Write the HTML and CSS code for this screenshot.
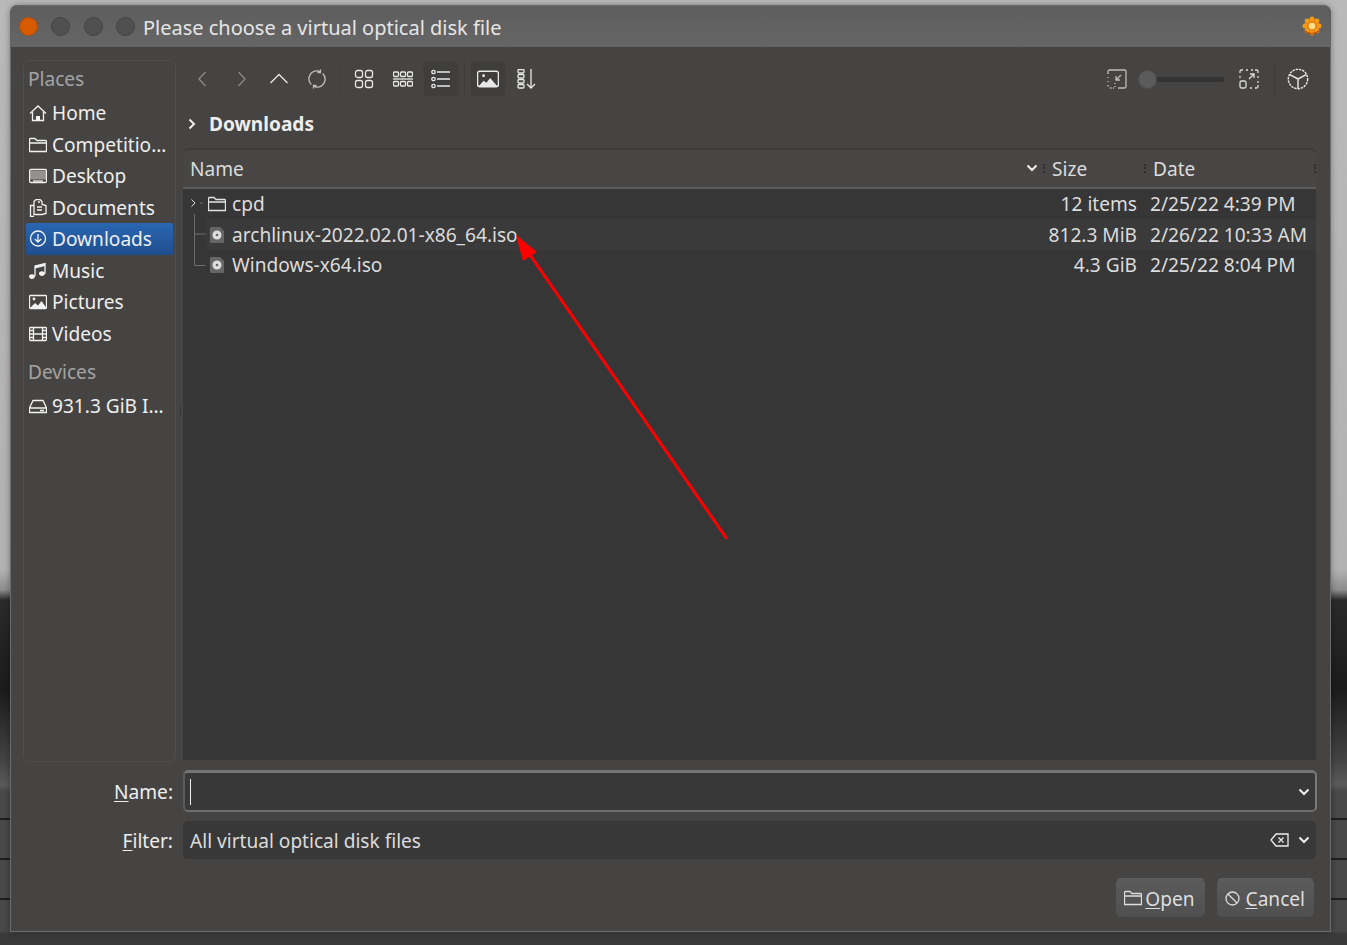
FILE: index.html
```html
<!DOCTYPE html>
<html lang="en">
<head>
<meta charset="utf-8">
<title>Please choose a virtual optical disk file</title>
<link rel="stylesheet" href="styles.css">
</head>
<body>
<div class="window">
	<header class="titlebar">
		<span class="dot dot-close"></span>
		<span class="dot"></span>
		<span class="dot"></span>
		<span class="dot"></span>
		<span class="title">Please choose a virtual optical disk file</span>
		<svg class="app-icon" width="20" height="20" viewBox="0 0 20 20"><circle cx="10" cy="10" r="7.500" fill="#ee8410"/><g fill="#f39a18"><circle cx="10" cy="2.900" r="2.400"/><circle cx="10" cy="17.100" r="2.400"/><circle cx="2.900" cy="10" r="2.400"/><circle cx="17.100" cy="10" r="2.400"/><circle cx="5" cy="5" r="2.400"/><circle cx="15" cy="5" r="2.400"/><circle cx="5" cy="15" r="2.400"/><circle cx="15" cy="15" r="2.400"/></g><circle cx="10" cy="10" r="3.200" fill="#ffe08a"/><path d="M3 15c3 3.500 10 3.500 14 0" fill="none" stroke="#b9500c" stroke-width="1.500"/></svg>
	</header>

	<div class="content">
		<div class="main">
			<aside class="places">
				<h4>Places</h4>
				<a class="place"><svg viewBox="0 0 18 18"><path d="M1 9.500 9 2l8 7.500M3.500 8v8.500h11V8"/><path class="solid" d="M7 12h4v4.500H7z"/></svg>Home</a>
				<a class="place"><svg viewBox="0 0 18 18"><path d="M.5 15.500v-12a1 1 0 0 1 1-1h4.500l2 2h8.500a1 1 0 0 1 1 1v10zM.5 7h17"/></svg>Competitio…</a>
				<a class="place"><svg viewBox="0 0 18 18"><rect x=".5" y="2.500" width="17" height="13" rx="1.500"/><path class="solid" d="M1 4h16v8.500H1z" opacity=".45"/><path d="M4 14h10"/></svg>Desktop</a>
				<a class="place"><svg viewBox="0 0 18 18"><path d="M5 17.500H1.500v-11H5M5 5.500V2.500l2-2h4l2 2v3l4 1v8l-4 1H5zM9 3h2M8 8h5M8 11h5"/></svg>Documents</a>
				<a class="place place-on"><svg viewBox="0 0 18 18"><circle cx="9" cy="8.500" r="7.500"/><path d="M9 4v8M5.800 9 9 12l3.200-3"/></svg>Downloads</a>
				<a class="place"><svg viewBox="0 0 18 18"><path d="M6 14V4l10-2.500v10"/><path class="solid" d="M6 14.500a3 2.400 0 1 1-5 -1.700 3 2.400 0 0 1 5 1.700zM16 11.500a3 2.400 0 1 1-5-1.700 3 2.400 0 0 1 5 1.700zM6 4l10-2.500v2.500L6 6.500z"/></svg>Music</a>
				<a class="place"><svg viewBox="0 0 18 18"><rect x=".5" y="2.500" width="17" height="13" rx="1"/><circle class="solid" cx="5" cy="6" r="1.400"/><path class="solid" d="M1 15l5-5 3 2.500 3.500-4.500 5 7z"/></svg>Pictures</a>
				<a class="place"><svg viewBox="0 0 18 18"><rect x=".5" y="2.500" width="17" height="13" rx="1"/><path d="M4.500 2.500v13M13.500 2.500v13M4.500 9h9M.5 5.500h4M.5 9h4M.5 12.500h4M13.500 5.500h4M13.500 9h4M13.500 12.500h4"/></svg>Videos</a>
				<h4 class="devices">Devices</h4>
				<a class="place"><svg viewBox="0 0 18 18"><path d="M.5 11 4 3.500h10l3.500 7.500v4.500H.5zM.5 11h17M11 13.500h4"/></svg>931.3 GiB I…</a>
			</aside>

			<div class="splitter"><i></i><i></i><i></i></div>

			<div class="browser">
				<div class="toolbar">
					<button class="tool dim"><svg viewBox="0 0 20 20"><path d="M12.500 3 6 10l6.500 7"/></svg></button>
					<button class="tool dim"><svg viewBox="0 0 20 20"><path d="M7.500 3 14 10l-6.500 7"/></svg></button>
					<button class="tool"><svg viewBox="0 0 20 20"><path d="M1.500 14 10 5.500l8.500 8.500"/></svg></button>
					<button class="tool dimmer"><svg viewBox="0 0 20 20"><path d="M4.300 15.500A8 8 0 0 1 11.500 2l1.800 1M15.700 4.500A8 8 0 0 1 8.500 18l-1.800-1M13.500 .5v3h-3M6.500 19.500v-3h3"/></svg></button>
					<span class="sep"></span>
					<button class="tool"><svg viewBox="0 0 20 20"><rect x="1.500" y="1.500" width="7" height="7" rx="2"/><rect x="11.500" y="1.500" width="7" height="7" rx="2"/><rect x="1.500" y="11.500" width="7" height="7" rx="2"/><rect x="11.500" y="11.500" width="7" height="7" rx="2"/></svg></button>
					<button class="tool tool-gap"><svg viewBox="0 0 20 20"><rect x=".5" y="3" width="5" height="4.500" rx="1"/><rect x="7.500" y="3" width="5" height="4.500" rx="1"/><rect x="14.500" y="3" width="5" height="4.500" rx="1"/><path d="M0 10h20"/><rect x=".5" y="12.500" width="5" height="4.500" rx="1"/><rect x="7.500" y="12.500" width="5" height="4.500" rx="1"/><rect x="14.500" y="12.500" width="5" height="4.500" rx="1"/></svg></button>
					<button class="tool tool-on"><svg viewBox="0 0 20 20"><circle cx="2.500" cy="3" r="1.700"/><circle cx="2.500" cy="10" r="1.700"/><circle cx="2.500" cy="17" r="1.700"/><path d="M6 3h13M6 10h13M6 17h13"/></svg></button>
					<span class="sep sep-tight"></span>
					<button class="tool tool-on"><svg viewBox="0 0 20 20" class="big"><rect x=".5" y="3" width="19" height="14" rx="2"/><circle class="solid" cx="6" cy="7" r="1.300"/><path class="solid" d="M1.500 16.500 6 11.500l2.500 2 3.500-4.500 6.500 7.500z"/></svg></button>
					<button class="tool tool-gap"><svg viewBox="0 0 20 20"><rect x="1" y=".5" width="6" height="3.500" rx="1"/><rect x="1" y="5.500" width="6" height="3.500" rx="1"/><rect x="1" y="10.500" width="6" height="3.500" rx="1"/><rect x="1" y="15.500" width="6" height="3.500" rx="1"/><path d="M14 0v19M10 15l4 4 4-4"/></svg></button>
					<span class="spacer"></span>
					<button class="tool dimmer"><svg viewBox="0 0 20 20"><path d="M1 5V2.500a1.500 1.500 0 0 1 1.500-1.500h15a1.500 1.500 0 0 1 1.500 1.500v15a1.500 1.500 0 0 1-1.500 1.500H11M14 6l-5 5M9 7v4h4"/><path d="M1 8v1M1 12v1M1 16v1.500M3 19h1.500M6 19h1M8 14v1M8 17v1"/></svg></button>
					<div class="zoom-slider"><span class="knob"></span><span class="groove"></span></div>
					<button class="tool dimmer bright"><svg viewBox="0 0 20 20"><path d="M1 4V2.500A1.500 1.500 0 0 1 2.500 1H4M7 1h2M12 1h2M16 1h1.500A1.500 1.500 0 0 1 19 2.500V4M19 7v2M19 12v2M19 16v1.500a1.500 1.500 0 0 1-1.500 1.500H16M13 19h-2M1 7v2M10 10l5-5M11 5h4v4"/><rect x="1" y="12" width="6" height="7" rx="1.500"/></svg></button>
					<span class="sep sep-right"></span>
					<button class="tool"><svg viewBox="0 0 20 20" class="big"><circle cx="10" cy="10" r="8.800" stroke-dasharray="2.200 .8"/><path d="M10 10 2.500 6M10 10l7.500-4M10 10v8.500"/></svg></button>
				</div>

				<div class="crumbs">
					<svg width="10" height="12" viewBox="0 0 10 12"><path d="M2.500 1.500 7 6l-4.500 4.500"/></svg>
					<b>Downloads</b>
				</div>

				<div class="view">
					<div class="head">
						<span class="h-name">Name</span>
						<svg class="sort" width="12" height="8" viewBox="0 0 12 8"><path d="M1.500 1.500 6 6l4.500-4.500"/></svg>
						<span class="grip"></span>
						<span class="h-size">Size</span>
						<span class="grip"></span>
						<span class="h-date">Date</span>
						<span class="grip"></span>
					</div>
					<div class="row">
						<svg class="branch" width="24" height="31" viewBox="0 0 24 31"><path d="M8.500 11.500 12 15l-3.500 3.500" stroke="#ddd"/><path d="M17 15h3"/><path d="M11.500 26v5"/></svg>
						<svg class="ico" width="18" height="18" viewBox="0 0 18 18"><path d="M.5 15.500v-12a1 1 0 0 1 1-1h4.500l2 2h8.500a1 1 0 0 1 1 1v10zM.5 7h17"/></svg>
						<span class="r-name">cpd</span>
						<span class="r-size">12 items</span>
						<span class="r-date">2/25/22 4:39 PM</span>
					</div>
					<div class="row row-alt">
						<svg class="branch" width="24" height="31" viewBox="0 0 24 31"><path d="M11.500 0v31M11.500 15h11"/></svg>
						<svg class="disc" width="14" height="16" viewBox="0 0 14 16"><path d="M1 0h9l4 4v11a1 1 0 0 1-1 1H1a1 1 0 0 1-1-1V1a1 1 0 0 1 1-1z" fill="#666"/><circle cx="7" cy="8" r="4.500" fill="#ddd"/><circle cx="7" cy="8" r="1.300" fill="#666"/></svg>
						<span class="r-name">archlinux-2022.02.01-x86_64.iso</span>
						<span class="r-size">812.3 MiB</span>
						<span class="r-date">2/26/22 10:33 AM</span>
					</div>
					<div class="row">
						<svg class="branch" width="24" height="31" viewBox="0 0 24 31"><path d="M11.500 0v15.500h11"/></svg>
						<svg class="disc" width="14" height="16" viewBox="0 0 14 16"><path d="M1 0h9l4 4v11a1 1 0 0 1-1 1H1a1 1 0 0 1-1-1V1a1 1 0 0 1 1-1z" fill="#666"/><circle cx="7" cy="8" r="4.500" fill="#ddd"/><circle cx="7" cy="8" r="1.300" fill="#666"/></svg>
						<span class="r-name">Windows-x64.iso</span>
						<span class="r-size">4.3 GiB</span>
						<span class="r-date">2/25/22 8:04 PM</span>
					</div>
				</div>
			</div>
		</div>

		<div class="field field-name">
			<label><u>N</u>ame:</label>
			<div class="name-input">
				<span class="caret"></span>
				<svg class="drop" width="12" height="8" viewBox="0 0 12 8"><path d="M1.500 1.500 6 6l4.500-4.500"/></svg>
			</div>
		</div>
		<div class="field field-filter">
			<label><u>F</u>ilter:</label>
			<div class="filter-input">
				<span class="filter-text">All virtual optical disk files</span>
				<svg class="clear" width="19" height="14" viewBox="0 0 19 14"><path d="M6 1h12v12H6L1 7zM8.500 4.500l5 5M13.500 4.500l-5 5"/></svg>
				<svg class="drop" width="12" height="8" viewBox="0 0 12 8"><path d="M1.500 1.500 6 6l4.500-4.500"/></svg>
			</div>
		</div>

		<div class="actions">
			<button class="btn"><svg width="18" height="18" viewBox="0 0 18 18"><path d="M.5 15.500v-12a1 1 0 0 1 1-1h4.500l2 2h8.500a1 1 0 0 1 1 1v10zM.5 7h17"/></svg><span><u>O</u>pen</span></button>
			<button class="btn btn-cancel"><svg width="15" height="15" viewBox="0 0 15 15"><circle cx="7.500" cy="7.500" r="6.500"/><path d="M3 3l9 9"/></svg><span><u>C</u>ancel</span></button>
		</div>
	</div>
</div>

<!-- red annotation arrow drawn over the dialog -->
<svg class="arrow" width="1347" height="945" viewBox="0 0 1347 945"><path d="M727 539 528 252" stroke="#f00" stroke-width="3" fill="none"/><path d="M516 235 537 252 523 261z" fill="#f00"/></svg>
</body>
</html>
```

FILE: styles.css
```css
*{margin:0; padding:0; box-sizing:border-box;}

html,body{height:945px; overflow:hidden;}
body{
	position:relative;
	padding:5px 0 0 10px;
	font-family:"Noto Sans", sans-serif;
	font-size:19.100px;
	color:#eee;
	background:
		repeating-linear-gradient(180deg, transparent 0 26px, #1e1e1e 26px 28px, transparent 28px 40px) 0 792px / 100% 140px no-repeat,
		linear-gradient(180deg, #b9b9b9 0, #b2b2b2 570px, #8c8c8c 590px, #2a2a2a 600px, #1b1b1b 690px, #444 760px, #5a5a5a 785px, #484848 792px, #484848 932px, #3a3a3a 933px);
}

svg{fill:none; stroke:currentColor; stroke-width:1.300; flex:none;}
svg .solid{fill:currentColor; stroke:none;}
button{font:inherit; color:inherit; border:0; background:none;}

/* window */
.window{
	width:1321px; height:927px;
	display:flex; flex-direction:column;
	background:#464442;
	border:1px solid #6c6c6c; border-top:0;
	border-radius:8px 8px 0 0;
	box-shadow:0 0 6px rgba(0,0,0,.35);
}
.titlebar{
	height:42px; flex:none;
	display:flex; align-items:center;
	padding-left:8px;
	border-radius:8px 8px 0 0;
	background:linear-gradient(180deg, #6a6a6a 0, #5d5d5d 2px, #666 100%);
	margin:0 -1px;
}
.dot{width:19px; height:19px; border-radius:50%; background:#505050; border:1px solid #444; margin-left:13.300px;}
.dot-close{background:#d65a00; border-color:#b44c00; margin-left:1px;}
.title{margin-left:8px; padding-top:2px; color:#e6e6e6; font-size:20px; flex:1;}
.app-icon{stroke:none; margin-right:9px;}

.content{flex:1; display:flex; flex-direction:column; padding:13px 14px 0 12px;}
.main{height:702px; display:flex; flex:none;}

/* places */
.places{
	width:153px; flex:none;
	border:1px solid #4f4d4b;
	border-radius:6px;
	padding:2px;
}
.places h4{font-weight:400; color:#a3a3a3; padding-left:2px; height:32px; line-height:32px; margin-bottom:2.300px;}
.places .devices{margin-top:6.200px;}
.place{
	display:flex; align-items:center;
	height:31.550px;
	padding-left:3px;
	white-space:nowrap;
}
.place svg{width:18px; height:18px; margin-right:5px; color:#f2f2f2;}
.place-on{background:linear-gradient(180deg, #2a66b2, #1f4e8e); border-radius:2px;}

.splitter{width:7px; flex:none; display:flex; flex-direction:column; justify-content:center; align-items:center; gap:1px; padding-left:1px;}
.splitter i{width:1px; height:2px; background:#2e2e2e;}

/* right side */
.browser{flex:1; display:flex; flex-direction:column; min-width:0; padding-bottom:2px;}
.toolbar{height:38px; display:flex; align-items:center; gap:2px; padding-left:2px; flex:none;}
.tool{width:36px; height:36px; flex:none; display:flex; align-items:center; justify-content:center; border-radius:6px; color:#e8e8e8;}
.tool svg{width:20px; height:20px;}
.tool svg.big{width:22px; height:22px;}
.tool-gap{margin-left:1px;}
.dim{color:#8a8a8a;}
.dimmer{color:#bdbdbd;}
.bright{color:#dcdcdc;}
.tool-on{background:#3f3e3d; box-shadow:inset 0 0 0 1px #434241;}
.sep{width:1px; height:34px; background:#3f3d3b; margin:0 3px 0 3px; flex:none;}
.sep-tight{margin:0 3px 0 3px;}
.sep-right{margin:0 3px 0 5px;}
.spacer{flex:1;}
.zoom-slider{width:86px; height:20px; position:relative; display:flex; align-items:center; flex:none; margin:0 5px 0 1px;}
.groove{flex:1; height:5px; background:#333; border-radius:2px; margin-left:-2px;}
.knob{width:19px; height:19px; border-radius:50%; background:#5b5b5b; border:1px solid #4e4e4e; flex:none; position:relative;}

.crumbs{height:50px; display:flex; align-items:center; gap:12px; padding:0 0 0 4px; flex:none;}
.crumbs svg{stroke-width:2; color:#eee; margin-top:1px;}
.crumbs b{font-weight:700; padding-top:2px;}

/* file list */
.view{flex:1; background:#363636; display:flex; flex-direction:column; min-height:0; border-radius:6px 6px 0 0;}
.head{
	height:40.600px; flex:none;
	display:flex; align-items:center;
	background:#484644;
	border-top:2px solid #3d3c3a;
	border-bottom:2px solid #5c5b5a;
	padding-left:7px;
	color:#dcdcdc;
	border-radius:6px 6px 0 0;
}
.h-name{flex:1; padding-top:1px;}
.sort{stroke-width:2; margin-right:5px; color:#eee;}
.grip{width:2px; height:9px; border-left:2px dotted #2e2e2e; flex:none;}
.h-size{width:99px; padding:1px 0 0 7px;}
.h-date{width:168px; padding:1px 0 0 7px;}
.row{height:30.700px; display:flex; align-items:center; color:#dcdcdc; flex:none;}
.row-alt{background:linear-gradient(90deg, #363636 23px, #3a3a3a 23px);}
.branch{stroke:#6e6e6e; stroke-width:1;}
.ico{color:#e4e4e4; margin-left:1px; width:18px;}
.disc{stroke:none; margin-left:3px; width:14px;}
.r-name{flex:1; padding-left:6px;}
.row-alt .r-name, .row:last-child .r-name{padding-left:8px;}
.r-size{width:120px; text-align:right;}
.r-date{width:179px; padding-left:13px;}

/* bottom form */
.field{display:flex; align-items:center; flex:none;}
.field label{width:150px; text-align:right; padding-top:2px;}
.field u{text-underline-offset:2px;}
.field-name{margin-top:8px; height:42px;}
.field-filter{margin-top:9px; height:38px;}
.name-input, .filter-input{
	margin-left:10px; flex:1; height:100%;
	display:flex; align-items:center;
	background:#383838;
	border-radius:5px;
}
.name-input{
	margin-right:-1px;
	border:2px solid #6e6e6e;
	border-top:3px solid #747474;
	border-left-color:#5c5c5c;
	border-right-color:#7a7a7a;
	padding:0 5px 0 5px;
}
.caret{width:1px; height:26px; background:#eee;}
.drop{stroke-width:2; margin-left:auto; color:#eee;}
.filter-input{padding:0 6px 0 7px; color:#dcdcdc;}
.filter-text{flex:1; padding-top:2px;}
.clear{color:#eee; margin-right:9px;}
.filter-input .drop{margin-left:0;}

.actions{display:flex; justify-content:flex-end; gap:10px; margin-top:19px; padding-right:1px;}
.btn{
	height:40px;
	display:flex; align-items:center; gap:3px;
	padding:0 10px 0 8px;
	border:1px solid #444;
	border-top-color:#5f5f5f;
	border-radius:6px;
	background:linear-gradient(180deg, #5b5b5b, #4f4f4f);
	color:#dedede;
}
.btn span{padding-top:2px;}
.btn-cancel{gap:6px; padding:0 9px 0 8px;}
.btn u{text-underline-offset:2px;}

.arrow{position:absolute; left:0; top:0; pointer-events:none; stroke:none;}
```
